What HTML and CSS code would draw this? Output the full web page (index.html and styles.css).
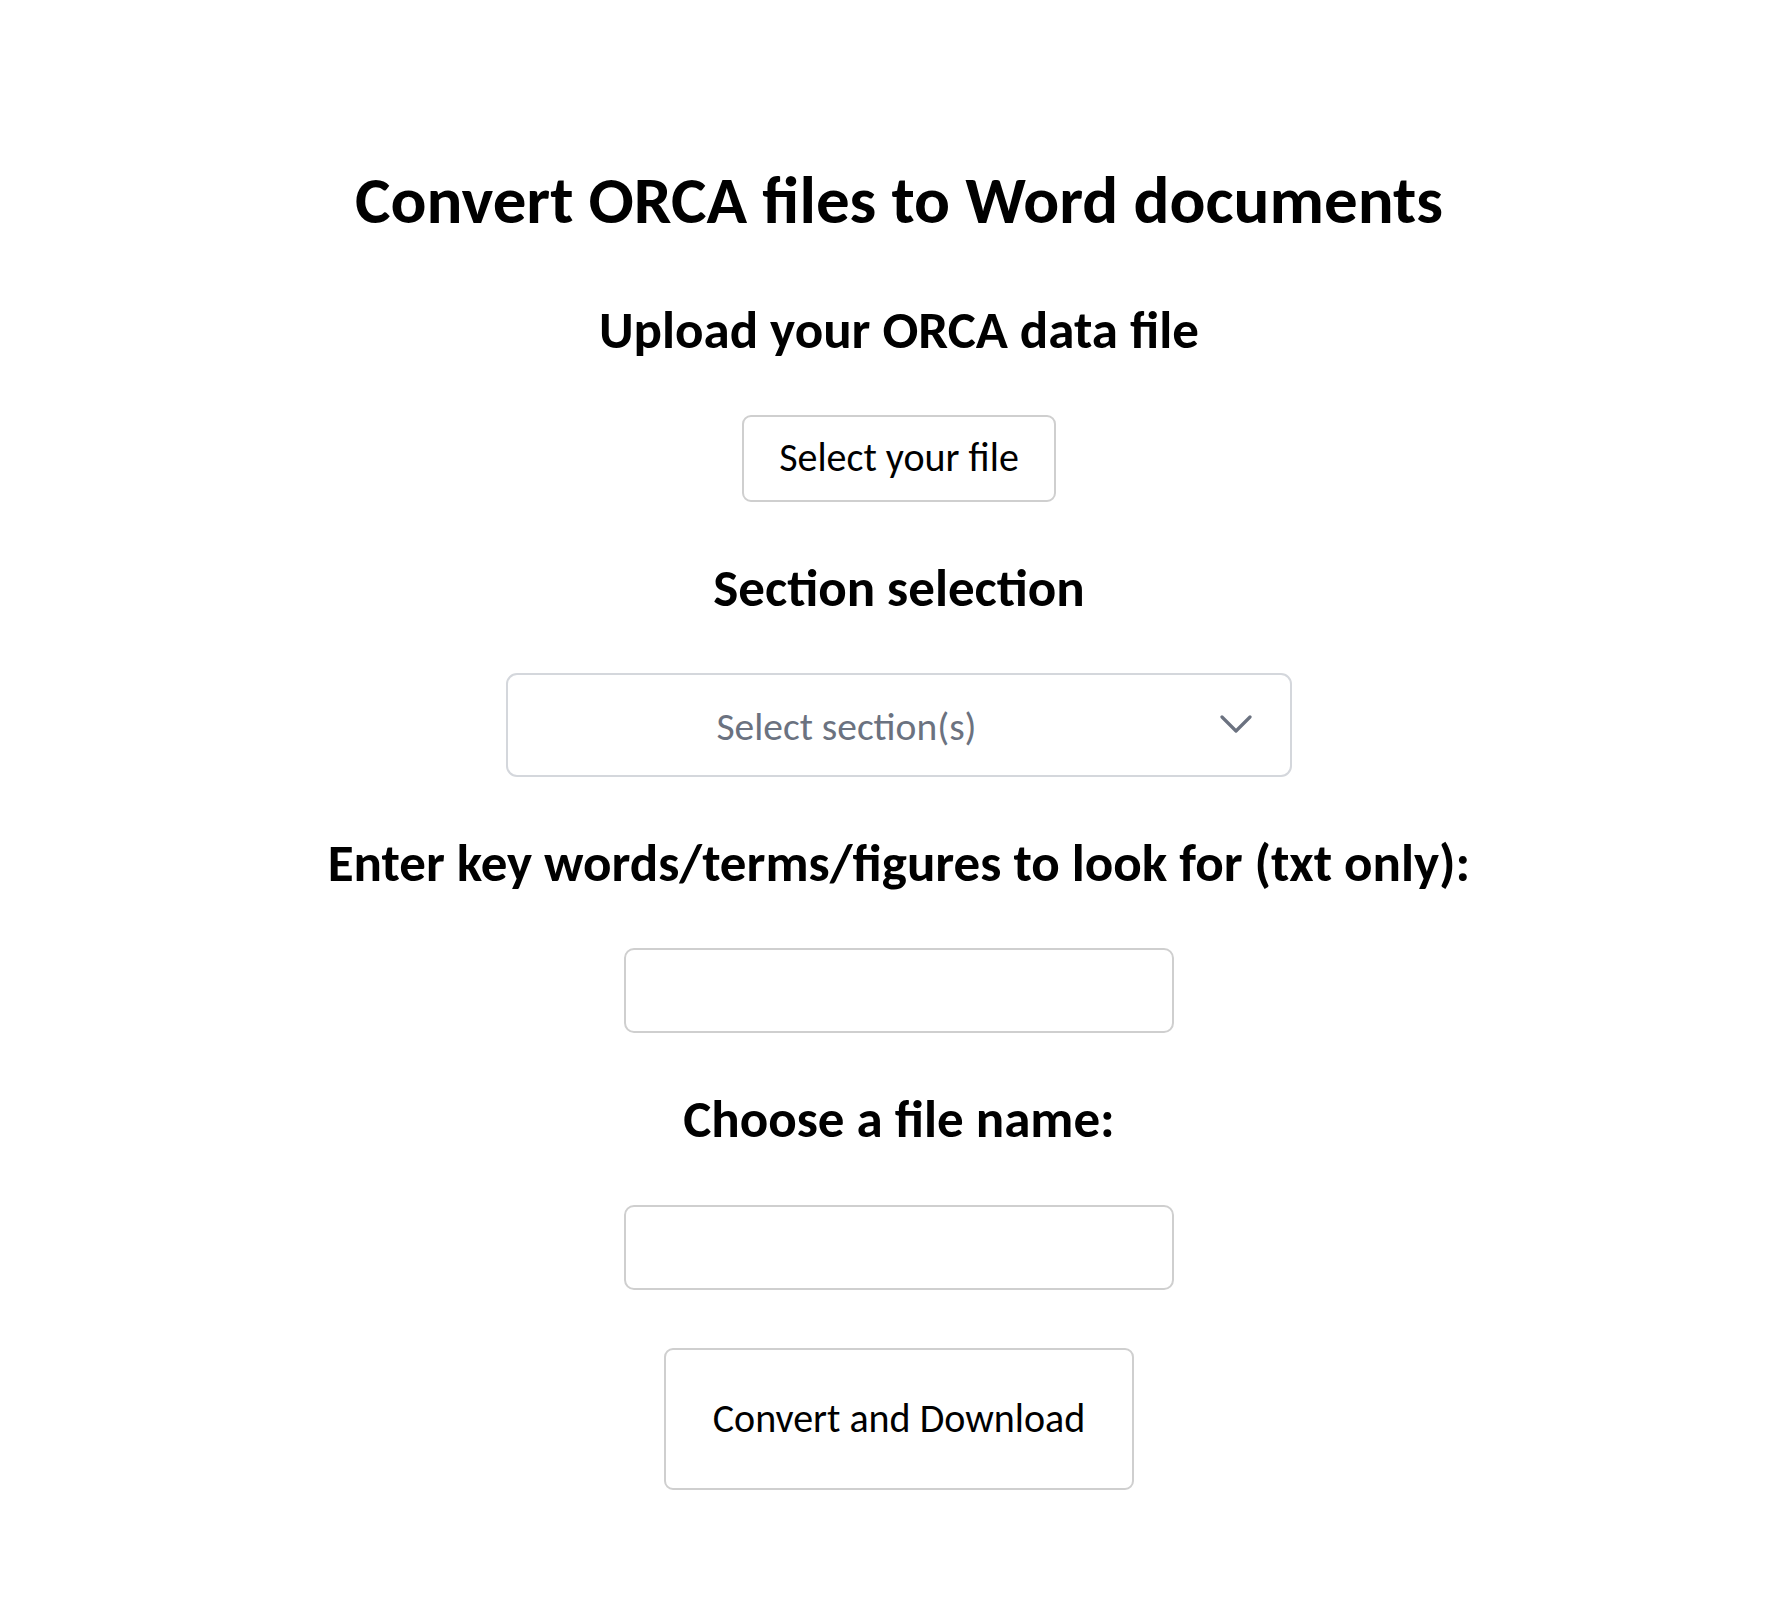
FILE: index.html
```html
<!DOCTYPE html>
<html lang="en">
<head>
<meta charset="utf-8">
<title>Convert ORCA files to Word documents</title>
<link rel="stylesheet" href="styles.css">
</head>
<body>
<main class="page">
  <h1 class="title">Convert ORCA files to Word documents</h1>

  <h2 class="heading heading-first">Upload your ORCA data file</h2>
  <button class="btn btn-file" type="button">Select your file</button>

  <h2 class="heading">Section selection</h2>
  <div class="select">
    <span class="select-label">Select section(s)</span>
    <svg class="chevron" width="32" height="19" viewBox="0 0 32 19" aria-hidden="true">
      <path d="M2 2 L16 16 L30 2" fill="none" stroke="#6b7280" stroke-width="3.2" stroke-linecap="round" stroke-linejoin="round"/>
    </svg>
  </div>

  <h2 class="heading">Enter key words/terms/figures to look for (txt only):</h2>
  <input class="field" type="text">

  <h2 class="heading">Choose a file name:</h2>
  <input class="field" type="text">

  <button class="btn btn-convert" type="button">Convert and Download</button>
</main>
</body>
</html>
```

FILE: styles.css
```css
html, body {
  margin: 0;
  padding: 0;
  background: #ffffff;
}

body {
  font-family: "Carlito", "Liberation Sans Narrow", "Open Sans", sans-serif;
  color: #000000;
}

.page {
  display: flex;
  flex-direction: column;
  align-items: center;
  padding: 160px 0 100px 12px;
}

.title {
  margin: 0;
  font-size: 67px;
  line-height: 1.2;
  font-weight: 700;
}

.heading {
  margin: 55px 0 0;
  font-size: 53px;
  line-height: 1.2;
  font-weight: 700;
  text-align: center;
}

.heading-first {
  margin-top: 59px;
}

.btn {
  font-family: inherit;
  font-size: 40px;
  line-height: 48px;
  color: #000000;
  background: #ffffff;
  border: 2px solid #cfcfcf;
  border-radius: 9px;
  cursor: pointer;
}

.btn-file {
  margin-top: 52px;
  width: 314px;
  height: 87px;
  padding: 0;
}

.select {
  margin-top: 52px;
  box-sizing: border-box;
  width: 786px;
  height: 104px;
  border: 2px solid #d4d7dc;
  border-radius: 11px;
  display: flex;
  align-items: center;
  gap: 41px;
  padding: 4px 38px 0 6px;
}

.select-label {
  flex: 1;
  text-align: center;
  font-size: 39.5px;
  line-height: 48px;
  color: #6b7280;
}

.chevron {
  flex: none;
  width: 32px;
  height: 19px;
  margin-top: -4px;
}

.field {
  margin-top: 53px;
  box-sizing: border-box;
  width: 550px;
  height: 85px;
  border: 2px solid #cfcfcf;
  border-radius: 10px;
  font-family: inherit;
  font-size: 40px;
  background: #ffffff;
}

.btn-convert {
  margin-top: 58px;
  width: 470px;
  height: 142px;
  padding: 0;
}
```
